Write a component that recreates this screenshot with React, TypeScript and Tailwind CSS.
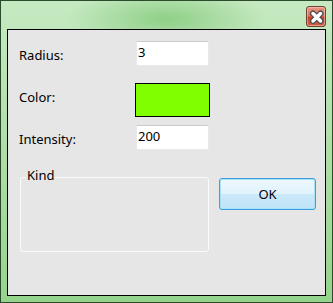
const CloseGlyph = () => (
  <svg width="20" height="21" viewBox="0 0 20 21" className="absolute left-0 top-0">
    <path d="M6 6.5 L13.5 14 M13.5 6.5 L6 14" stroke="#4b4b52" strokeWidth="6" strokeLinecap="round" />
    <path d="M6 6.5 L13.5 14 M13.5 6.5 L6 14" stroke="#ffffff" strokeWidth="3.5" strokeLinecap="round" />
  </svg>
);

function CloseButton() {
  return (
    <div className="relative w-[20px] h-[21px] rounded-[3px] border border-[#6d4237] bg-[linear-gradient(to_bottom,#e99984_0%,#da7258_45%,#c8432a_55%,#d15f45_100%)] shadow-[inset_0_0_0_1px_rgba(255,210,200,0.5)]">
      <CloseGlyph />
    </div>
  );
}

function Field({ label, children, height, gap }: { label: string; children: React.ReactNode; height: string; gap: string }) {
  return (
    <div className={`flex items-start ${height} ${gap}`}>
      <span className="w-[117px] pt-[6px] leading-[17px]">{label}</span>
      {children}
    </div>
  );
}

function TextBox({ value }: { value: string }) {
  return (
    <div className="w-[73px] h-[25px] bg-white rounded-[2px] border border-[#e6e9ee] border-t-[#c9cbd0] pl-[1px] pt-[2px] leading-[17px]">
      {value}
    </div>
  );
}

export default function App() {
  return (
    <div className="w-[333px] h-[303px] flex flex-col border border-[#2c4a2c] px-[6px] pb-[6px] font-['Noto_Sans',sans-serif] text-[13px] text-black bg-[image:radial-gradient(ellipse_100px_32px_at_50%_18px,#8fd087,transparent),linear-gradient(to_bottom,#c6e9c2,#95d48c)]">
      <div className="h-[28px] flex justify-end items-start pt-[5px]">
        <CloseButton />
      </div>
      <div className="flex-1 border border-black bg-[#e6e6e6] pl-[11px] pt-[11px] flex flex-col">
        <Field label="Radius:" height="h-[25px]" gap="mt-0">
          <TextBox value="3" />
        </Field>
        <Field label="Color:" height="h-[34px]" gap="mt-[17px]">
          <div className="w-[75px] h-[34px] -ml-[1px] border border-black bg-[#80ff00]" />
        </Field>
        <Field label="Intensity:" height="h-[25px]" gap="mt-[8px]">
          <TextBox value="200" />
        </Field>
        <div className="flex items-start mt-[17px]">
          <fieldset className="ml-[1px] w-[189px] h-[85px] border border-[#fafafa] rounded-[3px]">
            <legend className="ml-[5px] px-[1px] pb-[3px] leading-[17px]">Kind</legend>
          </fieldset>
          <button className="ml-[10px] mt-[11px] w-[97px] h-[32px] rounded-[3px] border border-[#3c9fdc] bg-[linear-gradient(to_bottom,#edf8fe_0%,#e0f2fc_50%,#cbe9f9_50%,#bfe3f7_100%)] shadow-[inset_0_0_0_1px_#a9e1fb] leading-[17px] text-black">
            OK
          </button>
        </div>
      </div>
    </div>
  );
}
